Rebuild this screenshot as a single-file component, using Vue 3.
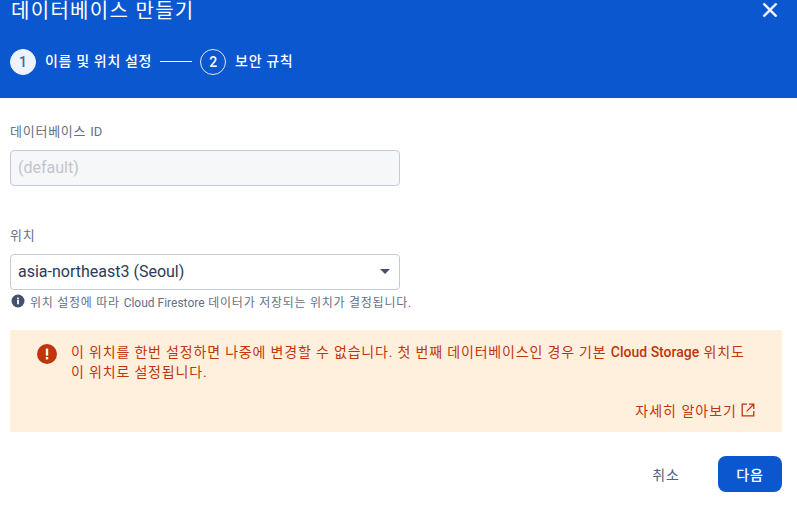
<script setup>
const steps = [
  { n: 1, label: '이름 및 위치 설정', active: true },
  { n: 2, label: '보안 규칙', active: false }
]
</script>

<template>
  <div class="dialog">
    <header class="head">
      <div class="title-row">
        <h1 class="title">데이터베이스 만들기</h1>
        <svg class="close" width="24" height="24" viewBox="0 0 24 24">
          <path d="M6.3 4.9 12 10.6l5.7-5.7 1.4 1.4-5.7 5.7 5.7 5.7-1.4 1.4-5.7-5.7-5.7 5.7-1.4-1.4 5.7-5.7-5.7-5.7z" fill="#fff" stroke="#fff" stroke-width=".5"/>
        </svg>
      </div>
      <div class="stepper">
        <template v-for="(s, i) in steps" :key="s.n">
          <div v-if="i > 0" class="line"></div>
          <div class="step">
            <span class="num" :class="{ on: s.active }">{{ s.n }}</span>
            <span class="label">{{ s.label }}</span>
          </div>
        </template>
      </div>
    </header>

    <main class="body">
      <label class="fl">데이터베이스 <span class="latin">ID</span></label>
      <div class="box off">(default)</div>

      <label class="fl second">위치</label>
      <div class="box sel">
        <span>asia-northeast3 (Seoul)</span>
        <i class="caret"></i>
      </div>
      <div class="hint">
        <svg width="14" height="14" viewBox="0 0 14 14">
          <circle cx="7" cy="7" r="6.5" fill="#44506e"/>
          <rect x="6.1" y="6" width="1.8" height="4.3" fill="#fff"/>
          <rect x="6.1" y="3.6" width="1.8" height="1.7" fill="#fff"/>
        </svg>
        <span>위치 설정에 따라 <span class="latin">Cloud Firestore</span> 데이터가 저장되는 위치가 결정됩니다.</span>
      </div>

      <section class="warn">
        <div class="warn-top">
          <svg class="warn-ic" width="20" height="20" viewBox="0 0 20 20">
            <circle cx="10" cy="10" r="10" fill="#bf360c"/>
            <rect x="8.8" y="4.6" width="2.4" height="7" fill="#fff"/>
            <rect x="8.8" y="13" width="2.4" height="2.4" fill="#fff"/>
          </svg>
          <p class="warn-text">이 위치를 한번 설정하면 나중에 변경할 수 없습니다. 첫 번째 데이터베이스인 경우 기본 <b>Cloud Storage</b> 위치도<br>이 위치로 설정됩니다.</p>
        </div>
        <div class="more">
          <span>자세히 알아보기</span>
          <svg width="14" height="14" viewBox="0 0 14 14" fill="none" stroke="#bf360c" stroke-width="1.3">
            <path d="M6 1.2H1.2v11.6h11.6V8"/>
            <path d="M8 1.2h4.8V6M12.8 1.2 5.6 8.4"/>
          </svg>
        </div>
      </section>

      <footer class="actions">
        <button class="btn ghost">취소</button>
        <button class="btn primary">다음</button>
      </footer>
    </main>
  </div>
</template>

<style scoped>
.dialog {
  width: 797px;
  height: 507px;
  overflow: hidden;
  background: #fff;
  font-family: Roboto, "Noto Sans CJK KR", sans-serif;
}
.head {
  height: 98px;
  box-sizing: border-box;
  background: #0b57d0;
  color: #fff;
  padding: 0 15px 0 11px;
}
.title-row {
  display: flex;
  justify-content: space-between;
  height: 48px;
}
.title {
  margin: -4px 0 0;
  font-size: 20px;
  font-weight: 400;
  line-height: 30px;
  letter-spacing: 1.3px;
}
.close { margin-top: -2px; }
.stepper {
  display: flex;
  align-items: center;
  height: 28px;
  margin-left: -1px;
}
.step {
  display: flex;
  align-items: center;
  gap: 9px;
}
.num {
  box-sizing: border-box;
  width: 26px;
  height: 26px;
  border-radius: 50%;
  border: 1px solid #dbe6fa;
  display: flex;
  align-items: center;
  justify-content: center;
  font-size: 14px;
  font-weight: 500;
}
.num.on {
  background: #edf2fd;
  border-color: #edf2fd;
  color: #44669c;
}
.label {
  font-size: 14px;
  font-weight: 500;
  letter-spacing: 0.65px;
  margin-top: -4px;
}
.line {
  width: 32px;
  height: 1px;
  margin: -1px 8px 0;
  background: #fff;
}
.body {
  padding: 0 15px 0 10px;
}
.fl {
  display: block;
  margin-top: 25px;
  height: 17px;
  line-height: 17px;
  font-size: 13px;
  letter-spacing: 0.75px;
  color: #667086;
}
.latin { letter-spacing: 0; }
.fl.second { margin-top: 41px; }
.box {
  box-sizing: border-box;
  width: 390px;
  height: 36px;
  margin-top: 10px;
  padding: 0 7px 1px;
  border: 1px solid #c5cad8;
  border-radius: 4px;
  display: flex;
  align-items: center;
  justify-content: space-between;
  font-size: 16px;
}
.sel { color: #2c3a58; }
.off {
  background: #f6f7f9;
  color: #c1c5cd;
}
.caret {
  width: 0;
  height: 0;
  margin-right: 2px;
  border-left: 5px solid transparent;
  border-right: 5px solid transparent;
  border-top: 5px solid #44506e;
}
.hint {
  display: flex;
  align-items: center;
  gap: 5px;
  margin-top: 2px;
  margin-left: 1px;
  height: 18px;
  font-size: 12px;
  letter-spacing: 0.74px;
  color: #667086;
  white-space: nowrap;
}
.warn {
  box-sizing: border-box;
  height: 102px;
  margin-top: 20px;
  padding: 12px 27px 0;
  background: #fff0de;
  color: #bf360c;
}
.warn-top {
  display: flex;
  gap: 14px;
}
.warn-ic { flex: none; margin-top: 2px; }
.warn-text {
  margin: 0;
  font-size: 14px;
  line-height: 20px;
  letter-spacing: 0.82px;
  white-space: nowrap;
}
.warn-text b { font-weight: 500; letter-spacing: 0; }
.more {
  display: flex;
  justify-content: flex-end;
  align-items: center;
  gap: 4px;
  margin-top: 18px;
  font-size: 14px;
  letter-spacing: 1px;
  height: 20px;
}
.actions {
  display: flex;
  justify-content: flex-end;
  align-items: center;
  margin-top: 24px;
  gap: 20px;
}
.btn {
  border: 0;
  width: 64px;
  height: 36px;
  border-radius: 8px;
  font-family: inherit;
  font-size: 14px;
  font-weight: 500;
  letter-spacing: 0.8px;
}
.ghost { background: transparent; color: #54627a; font-weight: 400; }
.primary { background: #0b57d0; color: #fff; }
</style>
